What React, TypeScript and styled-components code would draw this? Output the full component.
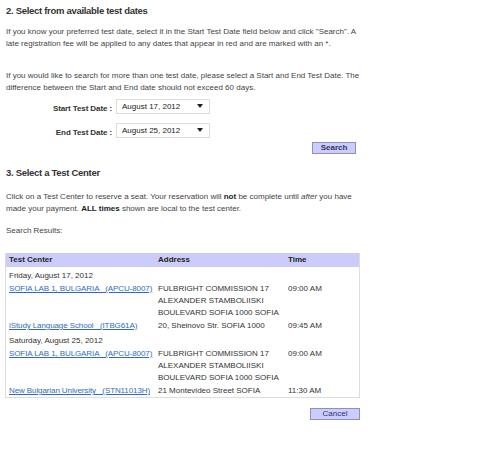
import { Fragment } from 'react'
import styled, { createGlobalStyle } from 'styled-components'

const GlobalStyle = createGlobalStyle`
  html, body {
    margin: 0;
    padding: 0;
    background: #ffffff;
  }
  body {
    font-family: 'Liberation Sans', Arial, sans-serif;
    color: #333333;
  }
`

const Page = styled.div`
  width: 354px;
  padding: 4px 0 0 6px;
`

const Heading = styled.h2<{ $top?: number }>`
  margin: ${(p) => p.$top ?? 0}px 0 0;
  font-size: 9.5px;
  letter-spacing: -0.3px;
  line-height: 13px;
  font-weight: bold;
  color: #333333;
`

const Text = styled.p<{ $top?: number }>`
  margin: ${(p) => p.$top ?? 12}px 0 0;
  font-size: 8px;
  line-height: 12px;
  color: #444444;
`

const DateForm = styled.div`
  display: grid;
  grid-template-columns: 110px 96px;
  row-gap: 9px;
  margin-top: 5px;
  align-items: center;
`

const DateLabel = styled.label`
  font-size: 8px;
  font-weight: bold;
  letter-spacing: -0.1px;
  text-align: right;
  padding: 3px 4px 0 0;
  color: #333333;
`

const SelectBox = styled.div`
  box-sizing: border-box;
  display: flex;
  align-items: center;
  justify-content: space-between;
  height: 15px;
  width: 94px;
  padding: 0 4px 1px 5px;
  border: 1px solid #dcdcdc;
  background: #ffffff;
  font-size: 8px;
  color: #222222;
`

const Caret = styled.span`
  width: 0;
  height: 0;
  border-left: 3px solid transparent;
  border-right: 3px solid transparent;
  border-top: 4px solid #222222;
  margin-right: 2px;
`

const ButtonRow = styled.div<{ $top: number; $right?: number }>`
  display: flex;
  justify-content: flex-end;
  margin-top: ${(p) => p.$top}px;
  padding-right: ${(p) => p.$right ?? 0}px;
`

const Button = styled.button<{ $width: number; $bold?: boolean }>`
  box-sizing: border-box;
  width: ${(p) => p.$width}px;
  height: 12px;
  padding: 0;
  border: 1px solid #8e8ec0;
  background: #ccccff;
  color: #33336b;
  font-family: 'Liberation Sans', Arial, sans-serif;
  font-size: 8px;
  font-weight: ${(p) => (p.$bold ? 'bold' : 'normal')};
  line-height: 10px;
`

const Table = styled.table`
  width: 355px;
  margin: 16px 0 0 -1px;
  border-collapse: collapse;
  border: 1px solid #dddddd;
  border-top: none;
  font-size: 8px;
  line-height: 12px;

  th {
    background: #ccccfb;
    text-align: left;
    font-weight: bold;
    height: 14px;
    padding: 0 3px;
    color: #222222;
  }
  td {
    vertical-align: top;
    padding: 1px 2px 0 3px;
    color: #333333;
  }
`

const DayCell = styled.td`
  padding-top: 3px !important;
`

const CenterLink = styled.a`
  color: #2f6bc4;
  text-decoration: underline;
  white-space: pre;
  letter-spacing: -0.1px;
`

const Strong = styled.b`
  color: #222222;
`

type Row = { name: string; code: string; address: string[]; time: string }

const days: { day: string; rows: Row[] }[] = [
  {
    day: 'Friday, August 17, 2012',
    rows: [
      {
        name: 'SOFIA LAB 1, BULGARIA',
        code: 'APCU-8007',
        address: ['FULBRIGHT COMMISSION 17', 'ALEXANDER STAMBOLIISKI', 'BOULEVARD SOFIA 1000 SOFIA'],
        time: '09:00 AM',
      },
      {
        name: 'iStudy Language School',
        code: 'ITBG61A',
        address: ['20, Sheinovo Str. SOFIA 1000'],
        time: '09:45 AM',
      },
    ],
  },
  {
    day: 'Saturday, August 25, 2012',
    rows: [
      {
        name: 'SOFIA LAB 1, BULGARIA',
        code: 'APCU-8007',
        address: ['FULBRIGHT COMMISSION 17', 'ALEXANDER STAMBOLIISKI', 'BOULEVARD SOFIA 1000 SOFIA'],
        time: '09:00 AM',
      },
      {
        name: 'New Bulgarian University',
        code: 'STN11013H',
        address: ['21 Montevideo Street SOFIA'],
        time: '11:30 AM',
      },
    ],
  },
]

export default function App() {
  return (
    <Page>
      <GlobalStyle />
      <Heading>2. Select from available test dates</Heading>
      <Text $top={9}>
        If you know your preferred test date, select it in the Start Test Date field below and click "Search". A
        late registration fee will be applied to any dates that appear in red and are marked with an *.
      </Text>
      <Text $top={20}>
        If you would like to search for more than one test date, please select a Start and End Test Date. The
        difference between the Start and End date should not exceed 60 days.
      </Text>
      <DateForm>
        <DateLabel>Start Test Date :</DateLabel>
        <SelectBox>
          August 17, 2012
          <Caret />
        </SelectBox>
        <DateLabel>End Test Date :</DateLabel>
        <SelectBox>
          August 25, 2012
          <Caret />
        </SelectBox>
      </DateForm>
      <ButtonRow $top={4} $right={4}>
        <Button $width={44} $bold>
          Search
        </Button>
      </ButtonRow>
      <Heading $top={12}>3. Select a Test Center</Heading>
      <Text $top={12}>
        Click on a Test Center to reserve a seat. Your reservation will <Strong>not</Strong> be complete until{' '}
        <i>after</i> you have made your payment. <Strong>ALL times</Strong> shown are local to the test center.
      </Text>
      <Text $top={10}>Search Results:</Text>
      <Table>
        <thead>
          <tr>
            <th style={{ width: 143 }}>Test Center</th>
            <th style={{ width: 124 }}>Address</th>
            <th>Time</th>
          </tr>
        </thead>
        <tbody>
          {days.map((d) => (
            <Fragment key={d.day}>
              <tr>
                <DayCell colSpan={3}>{d.day}</DayCell>
              </tr>
              {d.rows.map((r, i) => (
                <tr key={i}>
                  <td>
                    <CenterLink href="#">{`${r.name}   (${r.code})`}</CenterLink>
                  </td>
                  <td>
                    {r.address.map((line) => (
                      <div key={line}>{line}</div>
                    ))}
                  </td>
                  <td>{r.time}</td>
                </tr>
              ))}
            </Fragment>
          ))}
        </tbody>
      </Table>
      <ButtonRow $top={10}>
        <Button $width={50}>Cancel</Button>
      </ButtonRow>
    </Page>
  )
}
